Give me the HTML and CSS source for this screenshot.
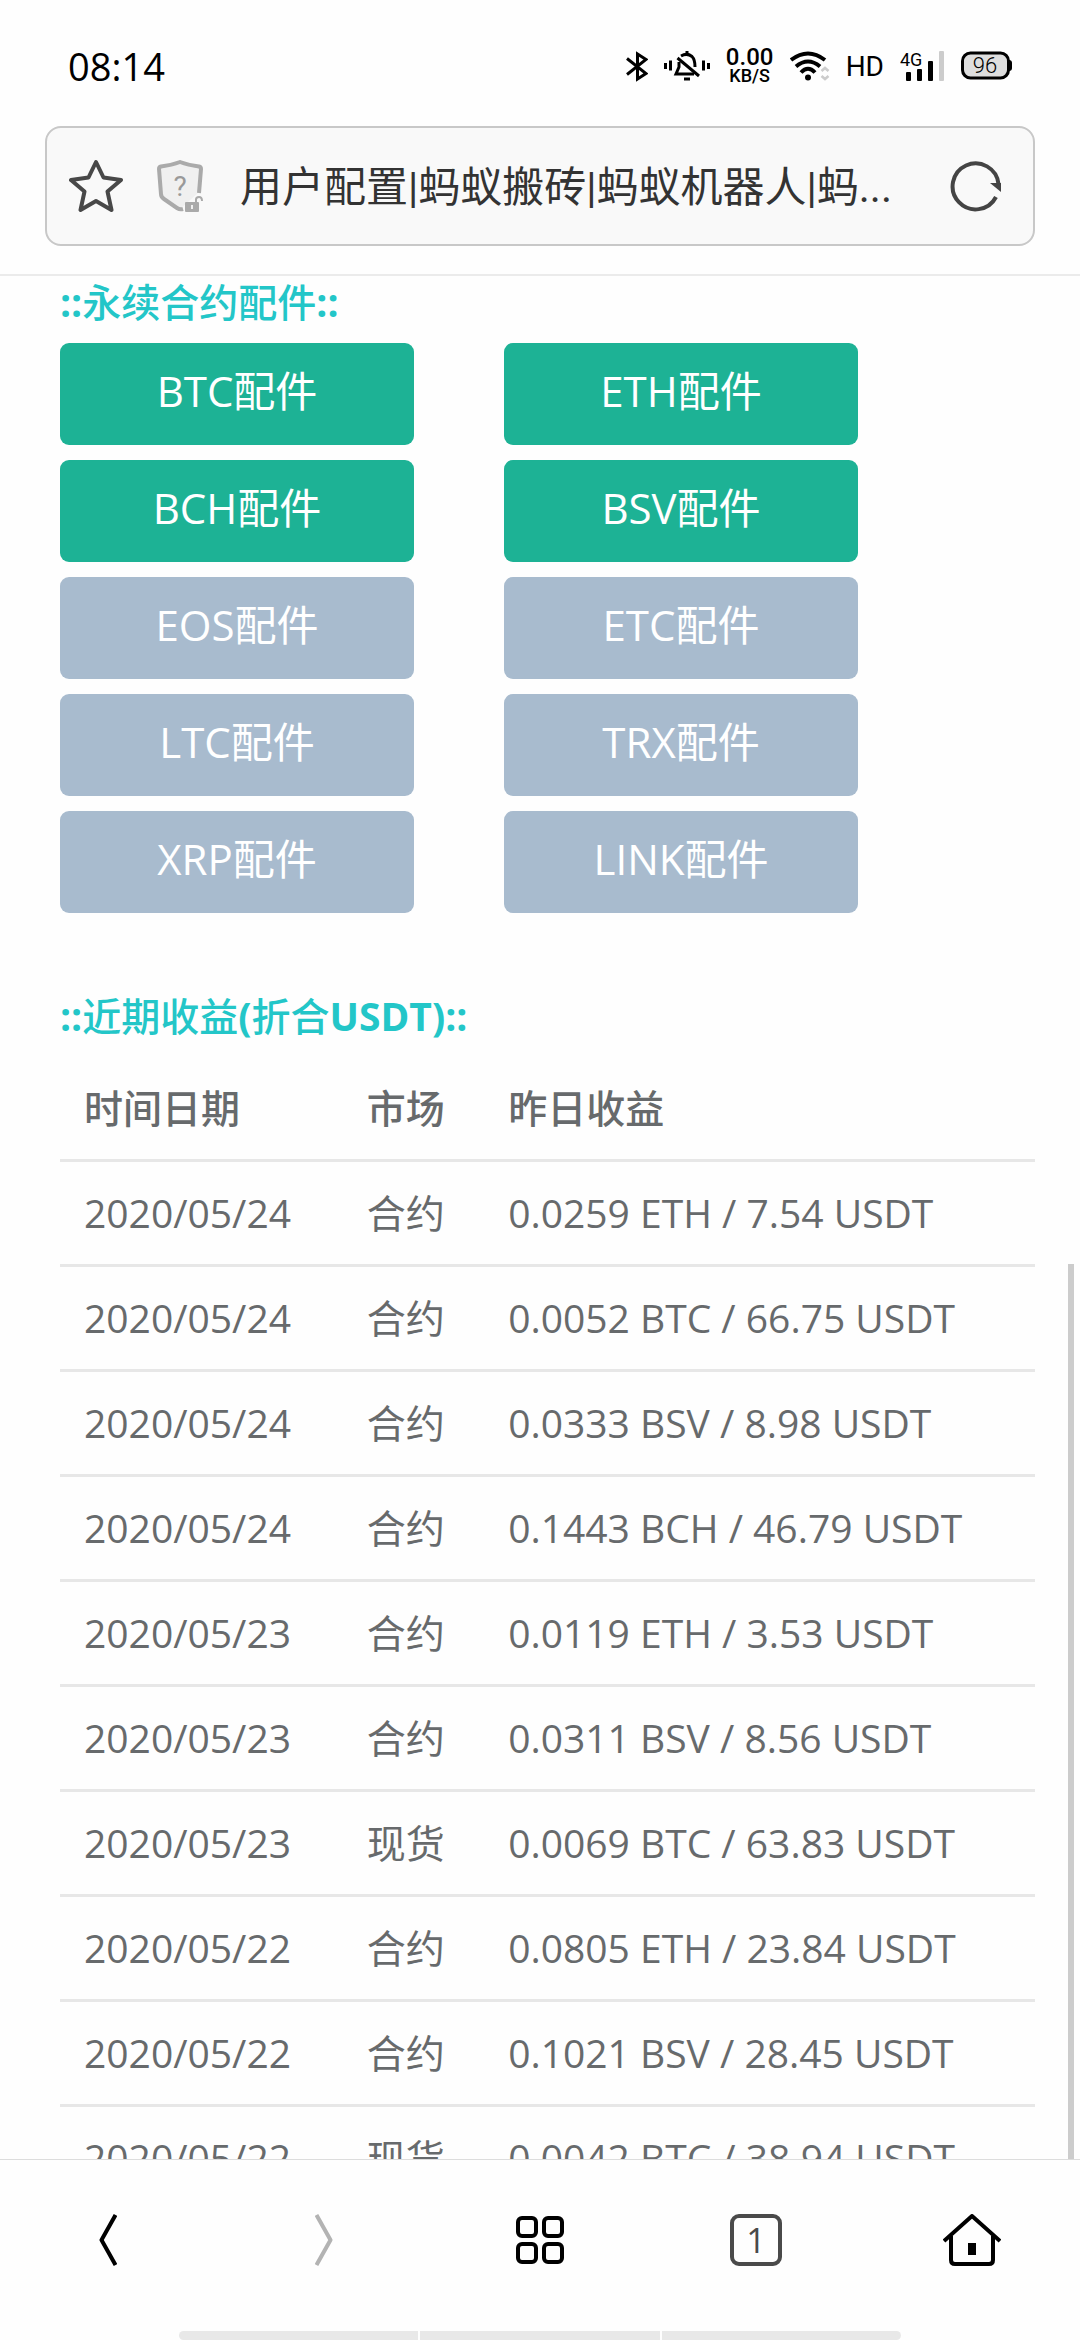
FILE: index.html
```html
<!DOCTYPE html>
<html lang="zh-CN">
<head>
    <meta charset="UTF-8">
    <meta name="viewport" content="width=device-width, initial-scale=1.0">
    <title>用户配置|蚂蚁搬砖|蚂蚁机器人</title>
    <link rel="stylesheet" href="styles.css">
</head>
<body>

    <div class="status-bar">
        <span class="clock">08:14</span>
        <div class="status-icons">
            <svg width="22" height="31" viewBox="0 0 22 31" fill="none" stroke="#000" stroke-width="3">
                <path d="M1 7.5L20 22.5L11.5 28V3L20 8.5L1 23.5"/>
            </svg>
            <svg width="46" height="31" viewBox="0 0 46 31" fill="none" stroke="#000" stroke-width="3">
                <path d="M1.5 12v6M6.5 9.5v10M39.5 9.5v10M44.5 12v6"/>
                <path d="M17 5Q23 1.500 28 5.500Q31 8.500 31 16"/>
                <path d="M13.500 7L35 25"/>
                <path d="M15 11V16L12 23H30"/>
                <path d="M23 0v4M20 28h6"/>
            </svg>
            <div class="net-speed">
                <span class="speed-num">0.00</span>
                <span class="speed-unit">KB/S</span>
            </div>
            <svg width="40" height="31" viewBox="0 0 40 31" fill="none" stroke="#000" stroke-width="4">
                <path d="M1 9Q18 -4 35 9"/>
                <path d="M6 15.500Q18 5.500 30 15.500"/>
                <path d="M11 21.500Q18 14 25 21.500"/>
                <circle cx="18" cy="26.500" r="3" fill="#000" stroke="none"/>
                <path d="M31.500 20L35 17L38.500 20M31.500 25L35 28L38.500 25" stroke="#ccc" stroke-width="2.600"/>
            </svg>
            <span class="hd">HD</span>
            <svg width="45" height="31" viewBox="0 0 45 31">
                <text class="net-type" x="0" y="15">4G</text>
                <rect x="6" y="21" width="5" height="9" rx="1"/>
                <rect x="17" y="18" width="5" height="12" rx="1"/>
                <rect x="28" y="10" width="5" height="20" rx="1"/>
                <rect x="39" y="0" width="5" height="30" rx="1" fill="#ccc"/>
            </svg>
            <svg width="51" height="31" viewBox="0 0 51 31">
                <path d="M47 9h1q3 0 3 3v5q0 3 -3 3h-1z"/>
                <rect x="1.500" y="2" width="46" height="25" rx="8" fill="#dedede" stroke="#000" stroke-width="3"/>
                <text class="battery-level" x="24" y="22" text-anchor="middle">96</text>
            </svg>
        </div>
    </div>

    <div class="browser-bar">
        <div class="address-box">
            <button class="icon-btn" type="button" aria-label="收藏">
                <svg width="54" height="54" viewBox="0 0 54 54" fill="none" stroke="#484848" stroke-width="4" stroke-linejoin="round">
                    <path d="M27 3L34.500 18.500L52 21L38.500 32.500L42.500 51L27 42L11.500 51L15.500 32.500L2 21L19.500 18.500Z"/>
                </svg>
            </button>
            <button class="icon-btn shield" type="button" aria-label="网站安全">
                <svg width="46" height="52" viewBox="0 0 46 52" fill="none" stroke="#aaa" stroke-width="4">
                    <path d="M23 49L7 39Q4 37 4 34L2 9Q2 7 4 6.500Q15 5 23 2Q31 5 42 6.500Q44 7 44 9L42 32L23 49Z" fill="#f0f0f0" stroke="none"/>
                    <path d="M26 49Q23 50 20 48L7 39Q4 37 4 34L2 9Q2 7 4 6.500Q15 5 23 2Q31 5 42 6.500Q44 7 44 9L42 33"/>
                    <rect x="28" y="42" width="14" height="10" rx="1" fill="#aaa" stroke="none"/>
                    <path d="M39 42V39.500Q39 37 42 37Q45 37 45 41" stroke-width="2"/>
                    <path d="M35 45v4" stroke="#f0f0f0" stroke-width="2"/>
                    <text class="shield-mark" x="23" y="36" text-anchor="middle">?</text>
                </svg>
            </button>
            <input class="address" type="text" aria-label="地址栏" value="用户配置|蚂蚁搬砖|蚂蚁机器人|蚂..." readonly>
            <button class="icon-btn" type="button" aria-label="刷新">
                <svg width="52" height="52" viewBox="0 0 52 52" fill="none" stroke="#444" stroke-width="4">
                    <path d="M46 37A23 23 0 1 1 48.500 24"/>
                    <path d="M40 23H51V32Z" fill="#444" stroke="none"/>
                </svg>
            </button>
        </div>
    </div>

    <main class="page">
        <h4 class="section-title">::<span class="cn">永续合约配件</span>::</h4>
        <div class="parts">
            <button class="btn btn-primary" type="button">BTC配件</button>
            <button class="btn btn-primary" type="button">ETH配件</button>
            <button class="btn btn-primary" type="button">BCH配件</button>
            <button class="btn btn-primary" type="button">BSV配件</button>
            <button class="btn btn-off" type="button">EOS配件</button>
            <button class="btn btn-off" type="button">ETC配件</button>
            <button class="btn btn-off" type="button">LTC配件</button>
            <button class="btn btn-off" type="button">TRX配件</button>
            <button class="btn btn-off" type="button">XRP配件</button>
            <button class="btn btn-off" type="button">LINK配件</button>
        </div>

        <h4 class="section-title">::<span class="cn">近期收益</span>(<span class="cn">折合</span>USDT)::</h4>
        <table class="profit">
            <thead>
                <tr>
                    <th class="col-date">时间日期</th>
                    <th class="col-market">市场</th>
                    <th>昨日收益</th>
                </tr>
            </thead>
            <tbody>
                <tr><td>2020/05/24</td><td>合约</td><td>0.0259 ETH / 7.54 USDT</td></tr>
                <tr><td>2020/05/24</td><td>合约</td><td>0.0052 BTC / 66.75 USDT</td></tr>
                <tr><td>2020/05/24</td><td>合约</td><td>0.0333 BSV / 8.98 USDT</td></tr>
                <tr><td>2020/05/24</td><td>合约</td><td>0.1443 BCH / 46.79 USDT</td></tr>
                <tr><td>2020/05/23</td><td>合约</td><td>0.0119 ETH / 3.53 USDT</td></tr>
                <tr><td>2020/05/23</td><td>合约</td><td>0.0311 BSV / 8.56 USDT</td></tr>
                <tr><td>2020/05/23</td><td>现货</td><td>0.0069 BTC / 63.83 USDT</td></tr>
                <tr><td>2020/05/22</td><td>合约</td><td>0.0805 ETH / 23.84 USDT</td></tr>
                <tr><td>2020/05/22</td><td>合约</td><td>0.1021 BSV / 28.45 USDT</td></tr>
                <tr><td>2020/05/22</td><td>现货</td><td>0.0042 BTC / 38.94 USDT</td></tr>
            </tbody>
        </table>
        <div class="scroll-thumb"></div>
    </main>

    <nav class="toolbar">
        <button class="icon-btn" type="button" aria-label="后退">
            <svg width="18" height="52" viewBox="0 0 18 52" fill="none" stroke="#000" stroke-width="4" stroke-linejoin="round">
                <path d="M16.500 1L2.500 26L16.500 51"/>
            </svg>
        </button>
        <button class="icon-btn" type="button" aria-label="前进" disabled>
            <svg width="18" height="52" viewBox="0 0 18 52" fill="none" stroke="#b3b3b3" stroke-width="4" stroke-linejoin="round">
                <path d="M1.500 1L15.500 26L1.500 51"/>
            </svg>
        </button>
        <button class="icon-btn" type="button" aria-label="菜单">
            <svg width="50" height="50" viewBox="0 0 50 50" fill="none" stroke="#000" stroke-width="4">
                <rect x="3" y="3" width="18" height="18" rx="4"/>
                <rect x="29" y="3" width="18" height="18" rx="4"/>
                <rect x="3" y="29" width="18" height="18" rx="4"/>
                <rect x="29" y="29" width="18" height="18" rx="4"/>
            </svg>
        </button>
        <button class="icon-btn" type="button" aria-label="标签页"><span class="tab-count">1</span></button>
        <button class="icon-btn" type="button" aria-label="主页">
            <svg width="58" height="52" viewBox="0 0 58 52" fill="none" stroke="#000" stroke-width="4" stroke-linejoin="round">
                <path d="M1 27L29 2L57 27"/>
                <path d="M8 22V46Q8 50 12 50H46Q50 50 50 46V22"/>
                <rect x="25" y="29" width="8" height="12" fill="#000" stroke="none"/>
            </svg>
        </button>
    </nav>
    <div class="gesture-bar">
        <span></span>
        <span></span>
        <span></span>
    </div>

</body>
</html>
```
FILE: styles.css
```css
* {
    box-sizing: border-box;
}

body {
    font-family: 'Open Sans', 'Noto Sans CJK SC', sans-serif;
    font-size: 39px;
    background-color: #FEFEFE;
    color: #676A6C;
    margin: 0;
    height: 100vh;
    display: flex;
    flex-direction: column;
    overflow: hidden;
}

button {
    font-family: inherit;
    border: none;
    padding: 0;
    cursor: pointer;
}

svg {
    display: block;
}

/* status bar */
.status-bar {
    display: flex;
    justify-content: space-between;
    align-items: center;
    height: 126px;
    padding: 6px 68px 0;
    color: #000;
}

.clock {
    font-size: 38px;
}

.status-icons {
    display: flex;
    align-items: center;
    gap: 16px;
}

.net-speed {
    display: flex;
    flex-direction: column;
    align-items: center;
    width: 48px;
    font-family: Roboto, sans-serif;
    font-weight: 500;
}

.speed-num {
    font-size: 24px;
    line-height: 20px;
}

.speed-unit {
    font-size: 18px;
    line-height: 18px;
}

.hd {
    font-family: 'Liberation Sans Narrow', Roboto, sans-serif;
    font-size: 28px;
    line-height: 31px;
}

.net-type {
    font-family: 'Liberation Sans Narrow', Roboto, sans-serif;
    font-size: 18px;
}

.battery-level {
    font-family: Roboto, sans-serif;
    font-size: 22px;
    font-weight: 300;
}

/* address bar */
.browser-bar {
    padding: 0 45px 28px;
    border-bottom: 2px solid #EBEBEB;
}

.address-box {
    display: flex;
    align-items: center;
    height: 120px;
    padding: 0 31px 0 22px;
    border: 2px solid #C8C8C8;
    border-radius: 16px;
    background: #F9F9F9;
}

.icon-btn {
    display: flex;
    justify-content: center;
    align-items: center;
    background: none;
}

.shield {
    margin: 0 37px 0 34px;
}

.shield-mark {
    font-family: Roboto, sans-serif;
    font-size: 28px;
    fill: #999;
    stroke: none;
}

.address {
    flex: 1;
    min-width: 0;
    padding: 0 0 6px;
    border: none;
    background: none;
    font-family: Roboto, 'Noto Sans CJK SC', sans-serif;
    font-size: 42px;
    color: #333;
}

/* web page */
.page {
    position: relative;
    flex: 1;
    min-height: 0;
    overflow: hidden;
    padding: 0 45px 0 60px;
}

.section-title {
    margin: 0;
    font-size: 39px;
    line-height: 52px;
    color: #23C6C8;
}

.cn {
    font-weight: 500;
}

.parts {
    display: grid;
    grid-template-columns: 1fr 1fr;
    gap: 15px 90px;
    max-width: 798px;
    margin: 15px 0 77px;
}

.btn {
    height: 102px;
    padding-bottom: 12px;
    border-radius: 9px;
    font-size: 42px;
    color: #FFF;
}

.btn-primary {
    background: #1DB295;
}

.btn-off {
    background: #A8BBCE;
}

.profit {
    width: 100%;
    margin-top: 15px;
    border-collapse: collapse;
    table-layout: fixed;
}

.profit th,
.profit td {
    padding: 24px;
    border-bottom: 3px solid #E7E7E7;
    line-height: 54px;
    text-align: left;
    white-space: nowrap;
}

.profit th {
    font-weight: 500;
}

.col-date {
    width: 29%;
}

.col-market {
    width: 14.5%;
}

.scroll-thumb {
    position: absolute;
    top: 988px;
    right: 6px;
    bottom: 0;
    width: 6px;
    background: #CCC;
}

/* bottom toolbar */
.toolbar {
    display: grid;
    grid-template-columns: repeat(5, 1fr);
    height: 172px;
    padding-bottom: 12px;
    border-top: 1px solid #DDD;
}

.tab-count {
    width: 52px;
    height: 52px;
    border: 4px solid #4A4A4A;
    border-radius: 9px;
    font-size: 34px;
    font-weight: 500;
    line-height: 44px;
    color: #4A4A4A;
}

.gesture-bar {
    display: flex;
    gap: 2px;
    height: 9px;
    padding: 0 179px;
}

.gesture-bar span {
    flex: 1;
    background: #E8E8E8;
}

.gesture-bar span:first-child {
    border-radius: 5px 0 0 5px;
}

.gesture-bar span:last-child {
    border-radius: 0 5px 5px 0;
}
```
